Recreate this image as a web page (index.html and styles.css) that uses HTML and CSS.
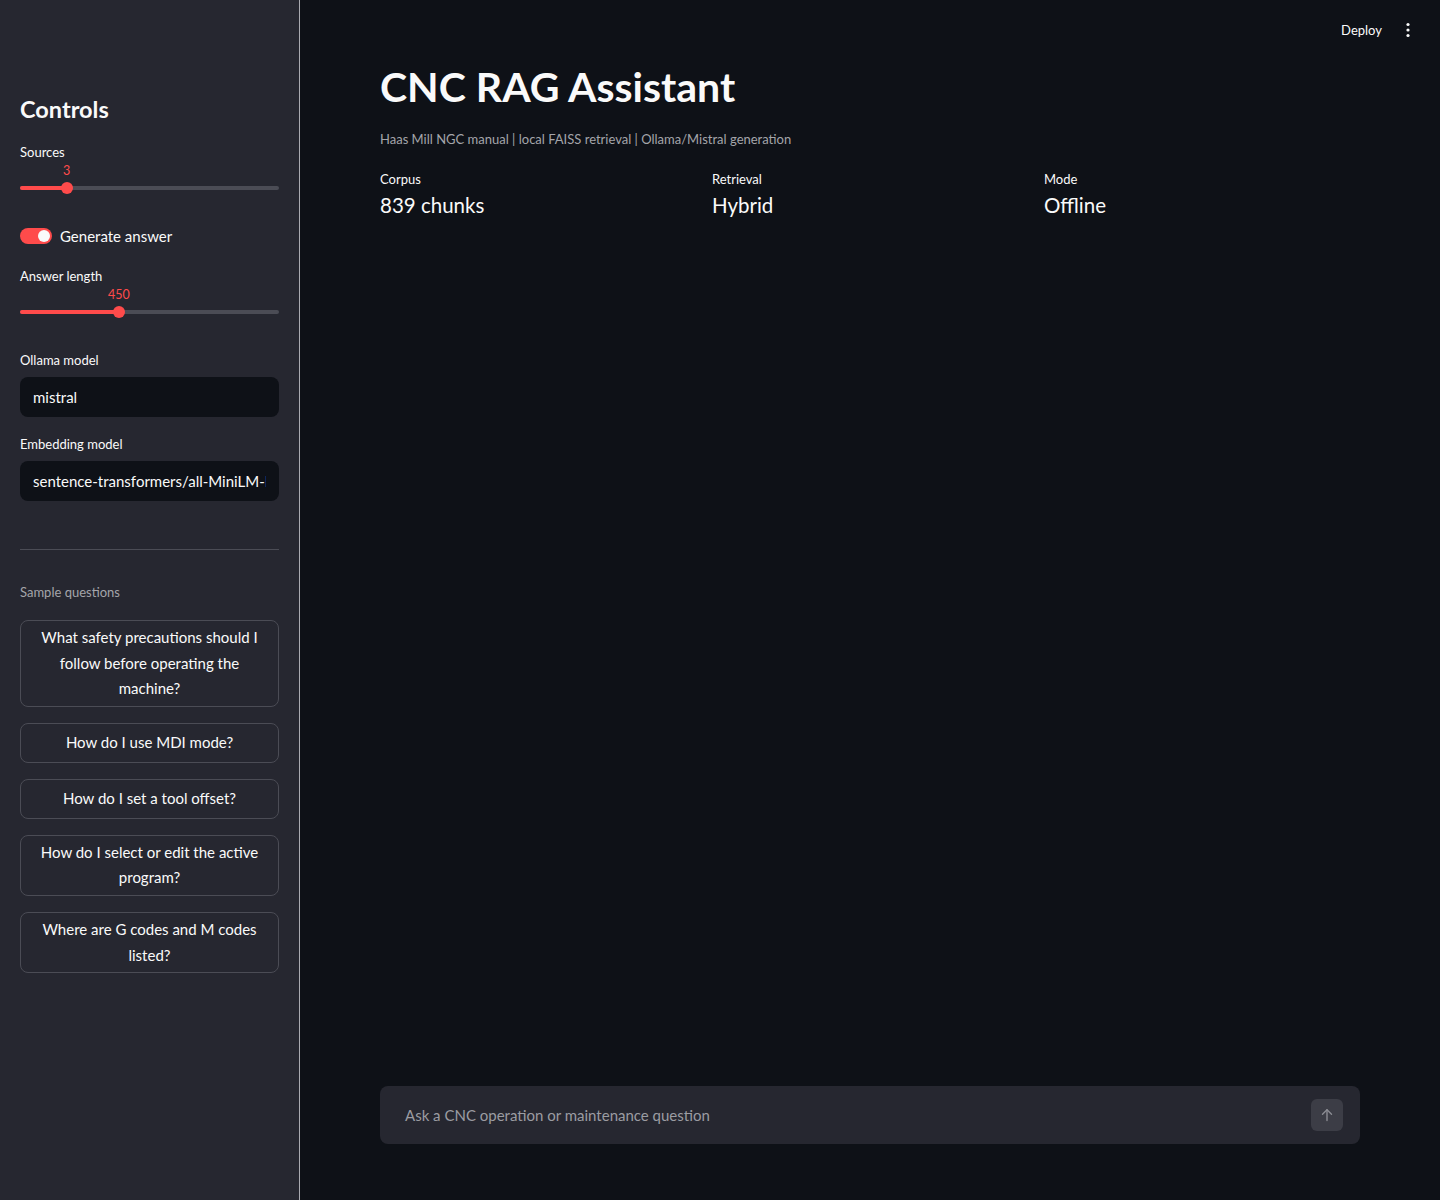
FILE: index.html
```html
<!DOCTYPE html>
<html lang="en">
  <head>
    <meta charset="UTF-8">
    <meta name="viewport" content="width=device-width, initial-scale=1.0">
    <title>CNC RAG Assistant</title>
    <link rel="stylesheet" href="styles.css">
  </head>
  <body>

    <aside class="sidebar">
      <h2 class="side-title">Controls</h2>

      <div class="field field-slider">
        <label class="field-label">Sources</label>
        <div class="slider">
          <span class="slider-value" style="left: 18%">3</span>
          <div class="slider-track">
            <div class="slider-fill" style="width: 18%"></div>
            <div class="slider-thumb" style="left: 18%"></div>
          </div>
        </div>
      </div>

      <div class="toggle-row">
        <span class="toggle"><span class="toggle-knob"></span></span>
        <span>Generate answer</span>
      </div>

      <div class="field field-slider">
        <label class="field-label">Answer length</label>
        <div class="slider">
          <span class="slider-value" style="left: 38.2%">450</span>
          <div class="slider-track">
            <div class="slider-fill" style="width: 38.2%"></div>
            <div class="slider-thumb" style="left: 38.2%"></div>
          </div>
        </div>
      </div>

      <div class="field">
        <label class="field-label" for="ollama">Ollama model</label>
        <input class="text-input" id="ollama" type="text" value="mistral">
      </div>

      <div class="field">
        <label class="field-label" for="embed">Embedding model</label>
        <input class="text-input" id="embed" type="text" value="sentence-transformers/all-MiniLM-L6-v2">
      </div>

      <hr class="divider">

      <p class="side-caption">Sample questions</p>
      <div class="questions">
        <button class="q-btn">What safety precautions should I follow before operating the machine?</button>
        <button class="q-btn">How do I use MDI mode?</button>
        <button class="q-btn">How do I set a tool offset?</button>
        <button class="q-btn">How do I select or edit the active program?</button>
        <button class="q-btn">Where are G codes and M codes listed?</button>
      </div>
    </aside>

    <main class="main">
      <div class="topbar">
        <span class="deploy">Deploy</span>
        <svg class="kebab" width="16" height="16" viewBox="0 0 16 16">
          <circle cx="8" cy="2.5" r="1.6" fill="#fafafa"/>
          <circle cx="8" cy="8" r="1.6" fill="#fafafa"/>
          <circle cx="8" cy="13.5" r="1.6" fill="#fafafa"/>
        </svg>
      </div>

      <div class="content">
        <h1 class="title">CNC RAG Assistant</h1>
        <p class="caption">Haas Mill NGC manual | local FAISS retrieval | Ollama/Mistral generation</p>

        <div class="metrics">
          <div class="metric">
            <div class="metric-label">Corpus</div>
            <div class="metric-value">839 chunks</div>
          </div>
          <div class="metric">
            <div class="metric-label">Retrieval</div>
            <div class="metric-value">Hybrid</div>
          </div>
          <div class="metric">
            <div class="metric-label">Mode</div>
            <div class="metric-value">Offline</div>
          </div>
        </div>
      </div>

      <div class="chat-box">
        <span class="chat-placeholder">Ask a CNC operation or maintenance question</span>
        <span class="send-btn">
          <svg width="16" height="16" viewBox="0 0 16 16" fill="none" stroke="#8b8c93" stroke-width="1.4" stroke-linecap="round" stroke-linejoin="round">
            <path d="M8 13.5V2.8"/>
            <path d="M3.5 7.2L8 2.7l4.5 4.5"/>
          </svg>
        </span>
      </div>
    </main>

  </body>
</html>
```

FILE: styles.css
```css
* { box-sizing: border-box; }

body {
  margin: 0;
  height: 1200px;
  display: flex;
  background-color: #0e1117;
  color: #fafafa;
  font-family: Lato, "Noto Sans", sans-serif;
  font-size: 15px;
}

/* sidebar */
.sidebar {
  width: 300px;
  flex-shrink: 0;
  background-color: #262730;
  border-right: 1px solid #a9aab0;
  padding: 93px 20px 0 20px;
}

.side-title {
  margin: 0 0 18px 0;
  font-size: 23.5px;
  font-weight: 700;
  line-height: 32px;
}

.field {
  margin-bottom: 18px;
}
.field-slider {
  margin-bottom: 33px;
}

.field-label {
  display: block;
  font-size: 13px;
  line-height: 18px;
  margin-bottom: 8px;
}

.slider {
  position: relative;
  height: 32px;
  margin-top: -7px;
  padding-top: 24px;
}
.slider-value {
  position: absolute;
  top: 1px;
  transform: translateX(-50%);
  color: #ff4b4b;
  font-size: 12.5px;
  line-height: 16px;
}
.slider-track {
  position: relative;
  height: 4px;
  border-radius: 2px;
  background-color: #4b4c55;
}
.slider-fill {
  height: 4px;
  border-radius: 2px;
  background-color: #ff4b4b;
}
.slider-thumb {
  position: absolute;
  top: -4px;
  width: 12px;
  height: 12px;
  margin-left: -6px;
  border-radius: 50%;
  background-color: #ff4b4b;
}

.toggle-row {
  display: flex;
  align-items: center;
  gap: 8px;
  margin: 34px 0 23px 0;
  font-size: 15px;
  line-height: 16px;
}
.toggle {
  position: relative;
  width: 32px;
  height: 16px;
  border-radius: 8px;
  background-color: #ff4b4b;
}
.toggle-knob {
  position: absolute;
  right: 2px;
  top: 2px;
  width: 12px;
  height: 12px;
  border-radius: 50%;
  background-color: #fafafa;
}

.text-input {
  display: block;
  width: 100%;
  height: 40px;
  border: none;
  border-radius: 8px;
  background-color: #0e1117;
  color: #fafafa;
  padding: 0 13px;
  font-family: inherit;
  font-size: 15px;
  outline: none;
}

.divider {
  border: none;
  border-top: 1px solid #4b4c55;
  margin: 48px 0 32px 0;
}

.side-caption {
  margin: 0 0 18px 0;
  font-size: 13px;
  line-height: 20px;
  color: #a4a5aa;
}

.questions {
  display: flex;
  flex-direction: column;
  gap: 16px;
}
.q-btn {
  width: 100%;
  min-height: 40px;
  padding: 4px 16px;
  border: 1px solid #4b4c55;
  border-radius: 8px;
  background-color: #262730;
  color: #fafafa;
  font-family: inherit;
  font-size: 15px;
  line-height: 25.6px;
  text-align: center;
}

/* main */
.main {
  flex: 1;
  display: flex;
  flex-direction: column;
  padding: 0 80px 56px 80px;
}

.topbar {
  display: flex;
  justify-content: flex-end;
  align-items: center;
  gap: 18px;
  height: 60px;
  margin-right: -56px;
}
.deploy {
  font-size: 13px;
}

.content {
  flex: 1;
}

.title {
  margin: 0;
  font-size: 41px;
  font-weight: 700;
  line-height: 54px;
}

.caption {
  margin: 17px 0 23px 0;
  font-size: 13px;
  color: #a4a5aa;
}

.metrics {
  display: grid;
  grid-template-columns: 1fr 1fr 1fr;
  gap: 16px;
}
.metric-label {
  font-size: 13px;
  line-height: 18px;
}
.metric-value {
  font-size: 20.5px;
  line-height: 34px;
}

.chat-box {
  display: flex;
  align-items: center;
  justify-content: space-between;
  height: 58px;
  border-radius: 8px;
  background-color: #262730;
  padding: 0 17px 0 25px;
}
.chat-placeholder {
  color: #9b9ca2;
  font-size: 15px;
}
.send-btn {
  display: flex;
  align-items: center;
  justify-content: center;
  width: 32px;
  height: 32px;
  border-radius: 6px;
  background-color: #3c3d46;
}
```
